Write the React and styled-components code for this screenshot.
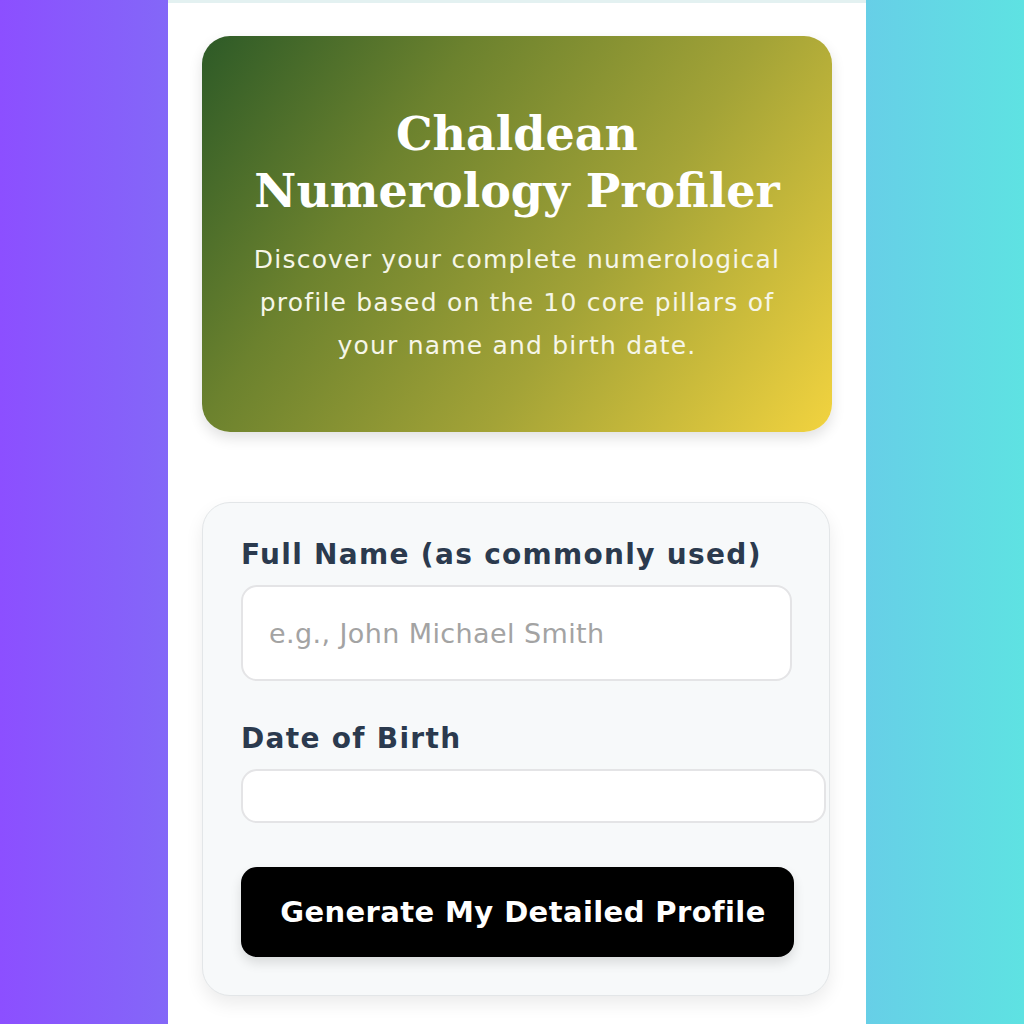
import React from "react";
import styled, { createGlobalStyle } from "styled-components";

const Global = createGlobalStyle`
  html, body {
    margin: 0;
    padding: 0;
  }
  body {
    background: linear-gradient(90deg, #8c4fff 0%, #7f74f4 25%, #6cc3ea 75%, #5ee2e2 100%);
    min-height: 1024px;
    font-family: "DejaVu Sans", Verdana, sans-serif;
  }
`;

const Page = styled.div`
  width: 698px;
  margin-left: 168px;
  min-height: 1024px;
  background: #ffffff;
  border-top: 3px solid #e3f1f1;
  box-sizing: border-box;
  padding: 33px 34px 40px;
  display: flex;
  flex-direction: column;
  gap: 70px;
`;

const Hero = styled.header`
  height: 396px;
  box-sizing: border-box;
  border-radius: 28px;
  background: linear-gradient(125deg, #2d5a27 0%, #6c822e 30%, #a3a337 62%, #f2d33f 100%);
  box-shadow: 0 6px 14px rgba(0, 0, 0, 0.12);
  color: #ffffff;
  text-align: center;
  padding: 70px 28px 0;
`;

const Title = styled.h1`
  margin: 0;
  font-family: "DejaVu Serif", Georgia, serif;
  font-weight: 700;
  font-size: 46px;
  line-height: 57px;
`;

const Subtitle = styled.p`
  margin: 18px 0 0;
  font-size: 25px;
  letter-spacing: 1.2px;
  line-height: 43px;
  color: #f6f6e8;
`;

const FormCard = styled.form`
  width: 628px;
  box-sizing: border-box;
  background: #f7f9fa;
  border: 1px solid #e3e6e8;
  border-radius: 28px;
  box-shadow: 0 8px 18px rgba(0, 0, 0, 0.08);
  padding: 34px 38px 38px;
  display: flex;
  flex-direction: column;
`;

const Label = styled.label`
  font-weight: 700;
  font-size: 28px;
  letter-spacing: 1.3px;
  color: #2b3a4e;
  line-height: 36px;
  margin-top: ${(p) => p.$top || 0}px;
`;

const Input = styled.input`
  box-sizing: border-box;
  width: ${(p) => p.$width}px;
  height: ${(p) => p.$height}px;
  margin-top: 12px;
  border: 2px solid #e4e4e6;
  border-radius: 16px;
  background: #ffffff;
  padding: 0 26px;
  font-family: "DejaVu Sans", Verdana, sans-serif;
  font-size: 27px;
  letter-spacing: 0.4px;
  color: #333;
  outline: none;

  &::placeholder {
    color: #a3a3a3;
  }
`;

const Button = styled.button`
  margin-top: 44px;
  width: 553px;
  height: 90px;
  border: none;
  border-radius: 16px;
  background: #000000;
  color: #ffffff;
  padding: 0 0 0 11px;
  font-family: "DejaVu Sans", Verdana, sans-serif;
  font-weight: 700;
  font-size: 29px;
  letter-spacing: 0.4px;
  box-shadow: 0 6px 12px rgba(0, 0, 0, 0.12);
  cursor: pointer;
`;

export default function App() {
  return (
    <>
      <Global />
      <Page>
        <Hero>
          <Title>
            Chaldean
            <br />
            Numerology Profiler
          </Title>
          <Subtitle>
            Discover your complete numerological profile based on the 10 core pillars of your name and birth date.
          </Subtitle>
        </Hero>
        <FormCard onSubmit={(e) => e.preventDefault()}>
          <Label htmlFor="name">Full Name (as commonly used)</Label>
          <Input id="name" type="text" placeholder="e.g., John Michael Smith" $width={551} $height={96} />
          <Label htmlFor="dob" $top={40}>Date of Birth</Label>
          <Input id="dob" type="text" $width={585} $height={54} />
          <Button type="submit">Generate My Detailed Profile</Button>
        </FormCard>
      </Page>
    </>
  );
}
